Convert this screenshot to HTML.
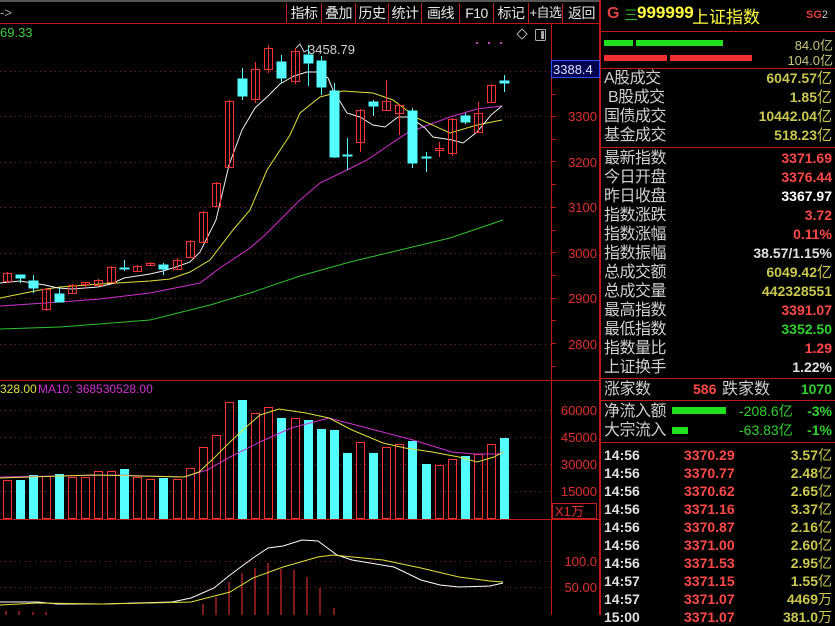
<!DOCTYPE html>
<html><head><meta charset="utf-8"><style>
*{margin:0;padding:0;box-sizing:border-box}
body{width:835px;height:615px;background:#000;overflow:hidden;position:relative;font-family:"Liberation Sans","Noto Sans CJK SC",sans-serif;color:#c8c8c8}
.a{position:absolute;white-space:nowrap}
.l{position:absolute;left:604px;font-size:16px;color:#d0d0d0;line-height:19px;letter-spacing:-0.5px}
.v{position:absolute;right:3px;font-size:14px;font-weight:bold;line-height:19px;text-align:right}
.btn{position:absolute;top:3px;height:20px;font-size:14px;color:#e8e8e8;text-align:center;line-height:20px;border-left:1px solid #c02020;white-space:nowrap;overflow:hidden;letter-spacing:-0.5px}
.t{position:absolute;font-size:14px;font-weight:bold;line-height:18px}
</style></head><body>
<div class="a" style="left:0;top:0;width:600px;height:2px;background:#555"></div>
<div class="a" style="left:0;top:5px;font-size:13px;color:#aaa">-&gt;</div>
<div class="btn" style="left:286px;width:35px">指标</div>
<div class="btn" style="left:321px;width:34px">叠加</div>
<div class="btn" style="left:355px;width:33px">历史</div>
<div class="btn" style="left:388px;width:33px">统计</div>
<div class="btn" style="left:421px;width:38px">画线</div>
<div class="btn" style="left:459px;width:34px">F10</div>
<div class="btn" style="left:493px;width:35px">标记</div>
<div class="btn" style="left:528px;width:34px;font-size:13px">+自选</div>
<div class="btn" style="left:562px;width:38px">返回</div>
<svg class="a" style="left:0;top:0" width="600" height="615" viewBox="0 0 600 615">
<g stroke="#c01818" stroke-width="1" fill="none">
<line x1="0" y1="23.5" x2="600" y2="23.5"/>
<line x1="551.5" y1="23" x2="551.5" y2="615"/>
<line x1="599.5" y1="0" x2="599.5" y2="615"/>
<line x1="0" y1="380.5" x2="600" y2="380.5"/>
<line x1="0" y1="519.5" x2="600" y2="519.5"/>
<path d="M551 94.5h5M551 116.5h5M551 139.5h5M551 161.5h5M551 184.5h5M551 207.5h5M551 230.5h5M551 252.5h5M551 275.5h5M551 298.5h5M551 320.5h5M551 343.5h5M551 366.5h5"/>
</g>
<g stroke="#802020" stroke-dasharray="1,4" stroke-width="1">
<line x1="0" y1="71.5" x2="551" y2="71.5"/><line x1="0" y1="116.5" x2="551" y2="116.5"/><line x1="0" y1="162.5" x2="551" y2="162.5"/><line x1="0" y1="207.5" x2="551" y2="207.5"/><line x1="0" y1="253.5" x2="551" y2="253.5"/><line x1="0" y1="298.5" x2="551" y2="298.5"/><line x1="0" y1="344.5" x2="551" y2="344.5"/>
<line x1="0" y1="410.5" x2="551" y2="410.5"/><line x1="0" y1="437.5" x2="551" y2="437.5"/><line x1="0" y1="464.5" x2="551" y2="464.5"/><line x1="0" y1="491.5" x2="551" y2="491.5"/>
<line x1="0" y1="561.5" x2="551" y2="561.5"/><line x1="0" y1="587.5" x2="551" y2="587.5"/>
</g>
<g font-size="13" fill="#e03030" text-anchor="end" font-family="Liberation Sans,sans-serif">
<text x="597" y="121">3300</text><text x="597" y="167">3200</text><text x="597" y="212">3100</text><text x="597" y="258">3000</text><text x="597" y="303">2900</text><text x="597" y="349">2800</text>
<text x="597" y="415">60000</text><text x="597" y="442">45000</text><text x="597" y="469">30000</text><text x="597" y="496">15000</text>
<text x="597" y="566">100.0</text><text x="597" y="592">50.00</text>
</g>
<rect x="552.5" y="503.5" width="44" height="15" fill="none" stroke="#c02020"/>
<text x="555" y="516" font-size="13" fill="#e03030">X1万</text>
<rect x="551.5" y="60.5" width="48" height="17" fill="#000050" stroke="#3050ff"/>
<text x="553" y="74" font-size="13" fill="#e0e0ff">3388.4</text>
<text x="0" y="37" font-size="13" fill="#40d040">69.33</text>
<text x="308" y="54" font-size="13" fill="#d0d0d0">3458.79</text>
<polyline points="296,48 300,44 304,52 308,50" fill="none" stroke="#ccc"/>
<g fill="#c040c0"><rect x="476" y="42" width="2" height="2"/><rect x="488" y="42" width="2" height="2"/><rect x="500" y="42" width="2" height="2"/></g>
<path d="M522 29 L527 34 L522 39 L517 34Z" fill="none" stroke="#aaa"/>
<rect x="535.5" y="29.5" width="10" height="11" rx="1" fill="none" stroke="#aaa"/><rect x="541" y="31" width="3" height="8" fill="#aaa"/>
<polyline fill="none" stroke="#30c030" points="0,329 60,327 150,320 210,305 250,293 300,276 350,262 400,250 450,238 503,220"/>
<polyline fill="none" stroke="#d030d0" points="0,306 60,302 100,299 150,293 200,283 220,268 250,248 265,235 300,200 320,183 347,170 367,160 407,133 450,117 477,109 502,106"/>
<polyline fill="none" stroke="#e0e040" points="0,298 40,290 60,287 100,284 150,281 170,279 190,272 210,260 233,230 250,210 267,170 290,135 300,113 320,97 343,91 373,93 393,100 417,118 450,133 477,125 502,120"/>
<polyline fill="none" stroke="#f0f0f0" points="0,283 20,281 45,285 58,288 72,289 85,288 98,287 111,284 124,278 137,276 150,274 163,271 176,267 190,262 200,252 216,220 229,165 242,130 255,108 268,96 280,84 294,76 307,72 320,72 328,78 333,90 347,113 360,117 373,125 385,127 398,117 410,117 425,128 433,137 452,140 463,143 477,132 491,115 502,106"/>
<g stroke="#ff3232" fill="none">
<line x1="7.5" y1="272" x2="7.5" y2="283"/><rect x="3.5" y="273.5" width="8" height="8"/>
<line x1="46.5" y1="288" x2="46.5" y2="311"/><rect x="42.5" y="289.5" width="8" height="20"/>
<line x1="72.5" y1="284" x2="72.5" y2="294"/><rect x="68.5" y="285.5" width="8" height="8"/>
<line x1="85.5" y1="282" x2="85.5" y2="289"/><rect x="81.5" y="282.5" width="8" height="2"/>
<line x1="98.5" y1="279" x2="98.5" y2="286"/><rect x="94.5" y="280.5" width="8" height="5"/>
<line x1="111.5" y1="266" x2="111.5" y2="282"/><rect x="107.5" y="267.5" width="8" height="15"/>
<line x1="137.5" y1="265" x2="137.5" y2="272"/><rect x="133.5" y="266.5" width="8" height="5"/>
<line x1="150.5" y1="262" x2="150.5" y2="266"/><rect x="146.5" y="263.5" width="8" height="2"/>
<line x1="177.5" y1="258" x2="177.5" y2="270"/><rect x="173.5" y="260.5" width="8" height="9"/>
<line x1="190.5" y1="240" x2="190.5" y2="258"/><rect x="186.5" y="241.5" width="8" height="16"/>
<line x1="203.5" y1="211" x2="203.5" y2="243"/><rect x="199.5" y="212.5" width="8" height="30"/>
<line x1="216.5" y1="182" x2="216.5" y2="207"/><rect x="212.5" y="183.5" width="8" height="23"/>
<line x1="229.5" y1="100" x2="229.5" y2="168"/><rect x="225.5" y="101.5" width="8" height="66"/>
<line x1="255.5" y1="62" x2="255.5" y2="103"/><rect x="251.5" y="69.5" width="8" height="30"/>
<line x1="268.5" y1="45" x2="268.5" y2="73"/><rect x="264.5" y="48.5" width="8" height="21"/>
<line x1="295.5" y1="48" x2="295.5" y2="84"/><rect x="291.5" y="51.5" width="8" height="30"/>
<line x1="360.5" y1="109" x2="360.5" y2="152"/><rect x="356.5" y="110.5" width="8" height="32"/>
<line x1="386.5" y1="80" x2="386.5" y2="111"/><rect x="382.5" y="101.5" width="8" height="9"/>
<line x1="399.5" y1="104" x2="399.5" y2="135"/><rect x="395.5" y="105.5" width="8" height="8"/>
<line x1="439.5" y1="142" x2="439.5" y2="157"/><rect x="435.5" y="148.5" width="8" height="2"/>
<line x1="452.5" y1="118" x2="452.5" y2="156"/><rect x="448.5" y="119.5" width="8" height="34"/>
<line x1="478.5" y1="102" x2="478.5" y2="133"/><rect x="474.5" y="113.5" width="8" height="19"/>
<line x1="491.5" y1="84" x2="491.5" y2="103"/><rect x="487.5" y="85.5" width="8" height="17"/>
</g>
<g stroke="#54ffff" fill="#54ffff">
<line x1="20.5" y1="275" x2="20.5" y2="283"/><rect x="16" y="275" width="9" height="3"/>
<line x1="33.5" y1="275" x2="33.5" y2="293"/><rect x="29" y="281" width="9" height="7"/>
<line x1="59.5" y1="288" x2="59.5" y2="302"/><rect x="55" y="294" width="9" height="8"/>
<line x1="124.5" y1="260" x2="124.5" y2="271"/><rect x="120" y="268" width="9" height="1"/>
<line x1="163.5" y1="263" x2="163.5" y2="275"/><rect x="159" y="265" width="9" height="4"/>
<line x1="242.5" y1="68" x2="242.5" y2="100"/><rect x="238" y="79" width="9" height="17"/>
<line x1="281.5" y1="55" x2="281.5" y2="83"/><rect x="277" y="62" width="9" height="16"/>
<line x1="308.5" y1="45" x2="308.5" y2="86"/><rect x="304" y="55" width="9" height="8"/>
<line x1="321.5" y1="56" x2="321.5" y2="95"/><rect x="317" y="61" width="9" height="26"/>
<line x1="334.5" y1="83" x2="334.5" y2="158"/><rect x="330" y="91" width="9" height="66"/>
<line x1="347.5" y1="138" x2="347.5" y2="170"/><rect x="343" y="155" width="9" height="1"/>
<line x1="373.5" y1="100" x2="373.5" y2="116"/><rect x="369" y="102" width="9" height="4"/>
<line x1="412.5" y1="108" x2="412.5" y2="168"/><rect x="408" y="111" width="9" height="52"/>
<line x1="426.5" y1="152" x2="426.5" y2="172"/><rect x="422" y="157" width="9" height="1"/>
<line x1="465.5" y1="113" x2="465.5" y2="124"/><rect x="461" y="116" width="9" height="6"/>
<line x1="504.5" y1="75" x2="504.5" y2="92"/><rect x="500" y="81" width="9" height="2"/>
</g>
<text x="0" y="393" font-size="12" fill="#e0e040">328.00</text>
<text x="38" y="393" font-size="12" fill="#d030d0">MA10: 368530528.00</text>
<g stroke="#ff3232" fill="none">
<rect x="3.5" y="480.5" width="8" height="38"/><rect x="42.5" y="476.5" width="8" height="42"/><rect x="68.5" y="477.5" width="8" height="41"/><rect x="81.5" y="477.5" width="8" height="41"/><rect x="94.5" y="471.5" width="8" height="47"/><rect x="107.5" y="471.5" width="8" height="47"/><rect x="133.5" y="477.5" width="8" height="41"/><rect x="146.5" y="479.5" width="8" height="39"/><rect x="173.5" y="479.5" width="8" height="39"/><rect x="186.5" y="468.5" width="8" height="50"/><rect x="199.5" y="447.5" width="8" height="71"/><rect x="212.5" y="435.5" width="8" height="83"/><rect x="225.5" y="402.5" width="8" height="116"/><rect x="251.5" y="413.5" width="8" height="105"/><rect x="264.5" y="407.5" width="8" height="111"/><rect x="291.5" y="418.5" width="8" height="100"/><rect x="356.5" y="442.5" width="8" height="76"/><rect x="382.5" y="447.5" width="8" height="71"/><rect x="395.5" y="444.5" width="8" height="74"/><rect x="435.5" y="465.5" width="8" height="53"/><rect x="448.5" y="459.5" width="8" height="59"/><rect x="474.5" y="454.5" width="8" height="64"/><rect x="487.5" y="444.5" width="8" height="74"/>
</g>
<g fill="#54ffff">
<rect x="16" y="480" width="9" height="39"/><rect x="29" y="475" width="9" height="44"/><rect x="55" y="474" width="9" height="45"/><rect x="120" y="469" width="9" height="50"/><rect x="159" y="478" width="9" height="41"/><rect x="238" y="400" width="9" height="119"/><rect x="277" y="418" width="9" height="101"/><rect x="304" y="420" width="9" height="99"/><rect x="317" y="429" width="9" height="90"/><rect x="330" y="430" width="9" height="89"/><rect x="343" y="453" width="9" height="66"/><rect x="369" y="453" width="9" height="66"/><rect x="408" y="441" width="9" height="78"/><rect x="422" y="464" width="9" height="55"/><rect x="461" y="456" width="9" height="63"/><rect x="500" y="438" width="9" height="81"/>
</g>
<polyline fill="none" stroke="#d030d0" points="0,477 115,475 184,477 207,470 230,457 260,442 291,428 329,418 367,428 413,440 452,452 475,454 498,454 503,452"/>
<polyline fill="none" stroke="#e0e040" points="0,478 92,475 184,477 199,472 214,458 230,442 245,428 260,415 279,409 306,413 329,418 352,430 383,443 405,448 432,452 459,457 477,462 494,457 503,452"/>
<g stroke="#ff3232">
<line x1="6" y1="615" x2="6" y2="611"/><line x1="19" y1="615" x2="19" y2="611"/><line x1="33" y1="615" x2="33" y2="612"/><line x1="46" y1="615" x2="46" y2="612"/>
<line x1="203" y1="615" x2="203" y2="604"/><line x1="216" y1="615" x2="216" y2="597"/><line x1="229" y1="615" x2="229" y2="582"/><line x1="242" y1="615" x2="242" y2="573"/><line x1="255" y1="615" x2="255" y2="568"/><line x1="268" y1="615" x2="268" y2="563"/><line x1="281" y1="615" x2="281" y2="569"/><line x1="294" y1="615" x2="294" y2="570"/><line x1="307" y1="615" x2="307" y2="577"/><line x1="320" y1="615" x2="320" y2="588"/><line x1="334" y1="615" x2="334" y2="608"/>
</g>
<polyline fill="none" stroke="#fff" points="0,602 38,602 57,604 103,604 172,602 191,598 214,588 230,575 253,558 268,548 283,546 302,540 318,541 337,555 352,560 394,567 421,580 440,585 459,587 490,586 503,583"/>
<polyline fill="none" stroke="#e0e040" points="0,605 38,603 103,604 191,602 230,592 253,578 283,567 318,557 333,555 383,560 421,568 459,577 490,581 503,582"/>
</svg>
<div class="a" style="left:600px;top:0;width:235px;height:615px;border-left:1px solid #c01818"></div>
<div class="a" style="left:607px;top:5px;font-size:16px;color:#e04040;font-weight:bold">G</div>
<div class="a" style="left:624px;top:5px;font-size:14px;color:#30c030">三</div>
<div class="a" style="left:637px;top:3px;font-size:17px;color:#ffff40;font-weight:bold">999999</div>
<div class="a" style="left:692px;top:3px;font-size:17px;color:#ffff40">上证指数</div>
<div class="a" style="left:806px;top:9px;font-size:11px;color:#e04040;font-weight:bold">SG<span style="color:#ccc;font-weight:normal">2</span></div>
<div class="a" style="left:601px;top:31px;width:234px;height:1px;background:#c01818"></div>
<div class="a" style="left:604px;top:40px;width:29px;height:6px;background:#20e020"></div>
<div class="a" style="left:636px;top:40px;width:87px;height:6px;background:#20e020"></div>
<div class="a" style="left:604px;top:55px;width:63px;height:6px;background:#f03030"></div>
<div class="a" style="left:670px;top:55px;width:82px;height:6px;background:#f03030"></div>
<div class="a" style="right:2px;top:35px;font-size:13px;color:#c8c880">84.0亿</div>
<div class="a" style="right:2px;top:50px;font-size:13px;color:#c8c880">104.0亿</div>
<div class="a" style="left:601px;top:68px;width:234px;height:1px;background:#c01818"></div>
<div class="l" style="top:69px">A股成交</div><div class="v" style="top:69px;color:#c8c850">6047.57<span style="font-weight:normal;font-size:15px">亿</span></div>
<div class="l" style="top:88px">&nbsp;B股成交</div><div class="v" style="top:88px;color:#c8c850">1.85<span style="font-weight:normal;font-size:15px">亿</span></div>
<div class="l" style="top:107px">国债成交</div><div class="v" style="top:107px;color:#c8c850">10442.04<span style="font-weight:normal;font-size:15px">亿</span></div>
<div class="l" style="top:126px">基金成交</div><div class="v" style="top:126px;color:#c8c850">518.23<span style="font-weight:normal;font-size:15px">亿</span></div>
<div class="a" style="left:601px;top:147px;width:234px;height:1px;background:#c01818"></div>
<div class="l" style="top:149px">最新指数</div><div class="v" style="top:149px;color:#ff4848">3371.69</div>
<div class="l" style="top:168px">今日开盘</div><div class="v" style="top:168px;color:#ff4848">3376.44</div>
<div class="l" style="top:187px">昨日收盘</div><div class="v" style="top:187px;color:#fff">3367.97</div>
<div class="l" style="top:206px">指数涨跌</div><div class="v" style="top:206px;color:#ff4848">3.72</div>
<div class="l" style="top:225px">指数涨幅</div><div class="v" style="top:225px;color:#ff4848">0.11%</div>
<div class="l" style="top:244px">指数振幅</div><div class="v" style="top:244px;color:#e0e0e0">38.57/1.15%</div>
<div class="l" style="top:263px">总成交额</div><div class="v" style="top:263px;color:#c8c850">6049.42<span style="font-weight:normal;font-size:15px">亿</span></div>
<div class="l" style="top:282px">总成交量</div><div class="v" style="top:282px;color:#c8c850">442328551</div>
<div class="l" style="top:301px">最高指数</div><div class="v" style="top:301px;color:#ff4848">3391.07</div>
<div class="l" style="top:320px">最低指数</div><div class="v" style="top:320px;color:#30d030">3352.50</div>
<div class="l" style="top:339px">指数量比</div><div class="v" style="top:339px;color:#ff4848">1.29</div>
<div class="l" style="top:358px">上证换手</div><div class="v" style="top:358px;color:#e0e0e0">1.22%</div>
<div class="a" style="left:601px;top:378px;width:234px;height:1px;background:#c01818"></div>
<div class="l" style="top:380px">涨家数</div><div class="a" style="left:693px;top:380px;font-size:14px;font-weight:bold;color:#ff4848;line-height:19px">586</div>
<div class="a" style="left:722px;top:380px;font-size:16px;color:#d0d0d0;line-height:19px">跌家数</div><div class="v" style="top:380px;color:#30d030">1070</div>
<div class="a" style="left:601px;top:400px;width:234px;height:1px;background:#c01818"></div>
<div class="l" style="top:402px">净流入额</div><div class="a" style="left:672px;top:407px;width:54px;height:7px;background:#20e020"></div>
<div class="a" style="left:739px;top:402px;font-size:14px;color:#30d030;line-height:19px">-208.6亿</div><div class="v" style="top:402px;color:#30d030">-3%</div>
<div class="l" style="top:421px">大宗流入</div><div class="a" style="left:672px;top:427px;width:16px;height:7px;background:#20e020"></div>
<div class="a" style="left:739px;top:421px;font-size:14px;color:#30d030;line-height:19px">-63.83亿</div><div class="v" style="top:421px;color:#30d030">-1%</div>
<div class="a" style="left:601px;top:442px;width:234px;height:1px;background:#c01818"></div>
<div class="t" style="left:604px;top:446px;color:#e0e0e0">14:56</div><div class="t" style="left:684px;top:446px;color:#ff4848">3370.29</div><div class="t" style="right:3px;top:446px;color:#c8c850">3.57<span style="font-weight:normal">亿</span></div>
<div class="t" style="left:604px;top:464px;color:#e0e0e0">14:56</div><div class="t" style="left:684px;top:464px;color:#ff4848">3370.77</div><div class="t" style="right:3px;top:464px;color:#c8c850">2.48<span style="font-weight:normal">亿</span></div>
<div class="t" style="left:604px;top:482px;color:#e0e0e0">14:56</div><div class="t" style="left:684px;top:482px;color:#ff4848">3370.62</div><div class="t" style="right:3px;top:482px;color:#c8c850">2.65<span style="font-weight:normal">亿</span></div>
<div class="t" style="left:604px;top:500px;color:#e0e0e0">14:56</div><div class="t" style="left:684px;top:500px;color:#ff4848">3371.16</div><div class="t" style="right:3px;top:500px;color:#c8c850">3.37<span style="font-weight:normal">亿</span></div>
<div class="t" style="left:604px;top:518px;color:#e0e0e0">14:56</div><div class="t" style="left:684px;top:518px;color:#ff4848">3370.87</div><div class="t" style="right:3px;top:518px;color:#c8c850">2.16<span style="font-weight:normal">亿</span></div>
<div class="t" style="left:604px;top:536px;color:#e0e0e0">14:56</div><div class="t" style="left:684px;top:536px;color:#ff4848">3371.00</div><div class="t" style="right:3px;top:536px;color:#c8c850">2.60<span style="font-weight:normal">亿</span></div>
<div class="t" style="left:604px;top:554px;color:#e0e0e0">14:56</div><div class="t" style="left:684px;top:554px;color:#ff4848">3371.53</div><div class="t" style="right:3px;top:554px;color:#c8c850">2.95<span style="font-weight:normal">亿</span></div>
<div class="t" style="left:604px;top:572px;color:#e0e0e0">14:57</div><div class="t" style="left:684px;top:572px;color:#ff4848">3371.15</div><div class="t" style="right:3px;top:572px;color:#c8c850">1.55<span style="font-weight:normal">亿</span></div>
<div class="t" style="left:604px;top:590px;color:#e0e0e0">14:57</div><div class="t" style="left:684px;top:590px;color:#ff4848">3371.07</div><div class="t" style="right:3px;top:590px;color:#c8c850">4469<span style="font-weight:normal">万</span></div>
<div class="t" style="left:604px;top:608px;color:#e0e0e0">15:00</div><div class="t" style="left:684px;top:608px;color:#ff4848">3371.07</div><div class="t" style="right:3px;top:608px;color:#c8c850">381.0<span style="font-weight:normal">万</span></div>
</body></html>
